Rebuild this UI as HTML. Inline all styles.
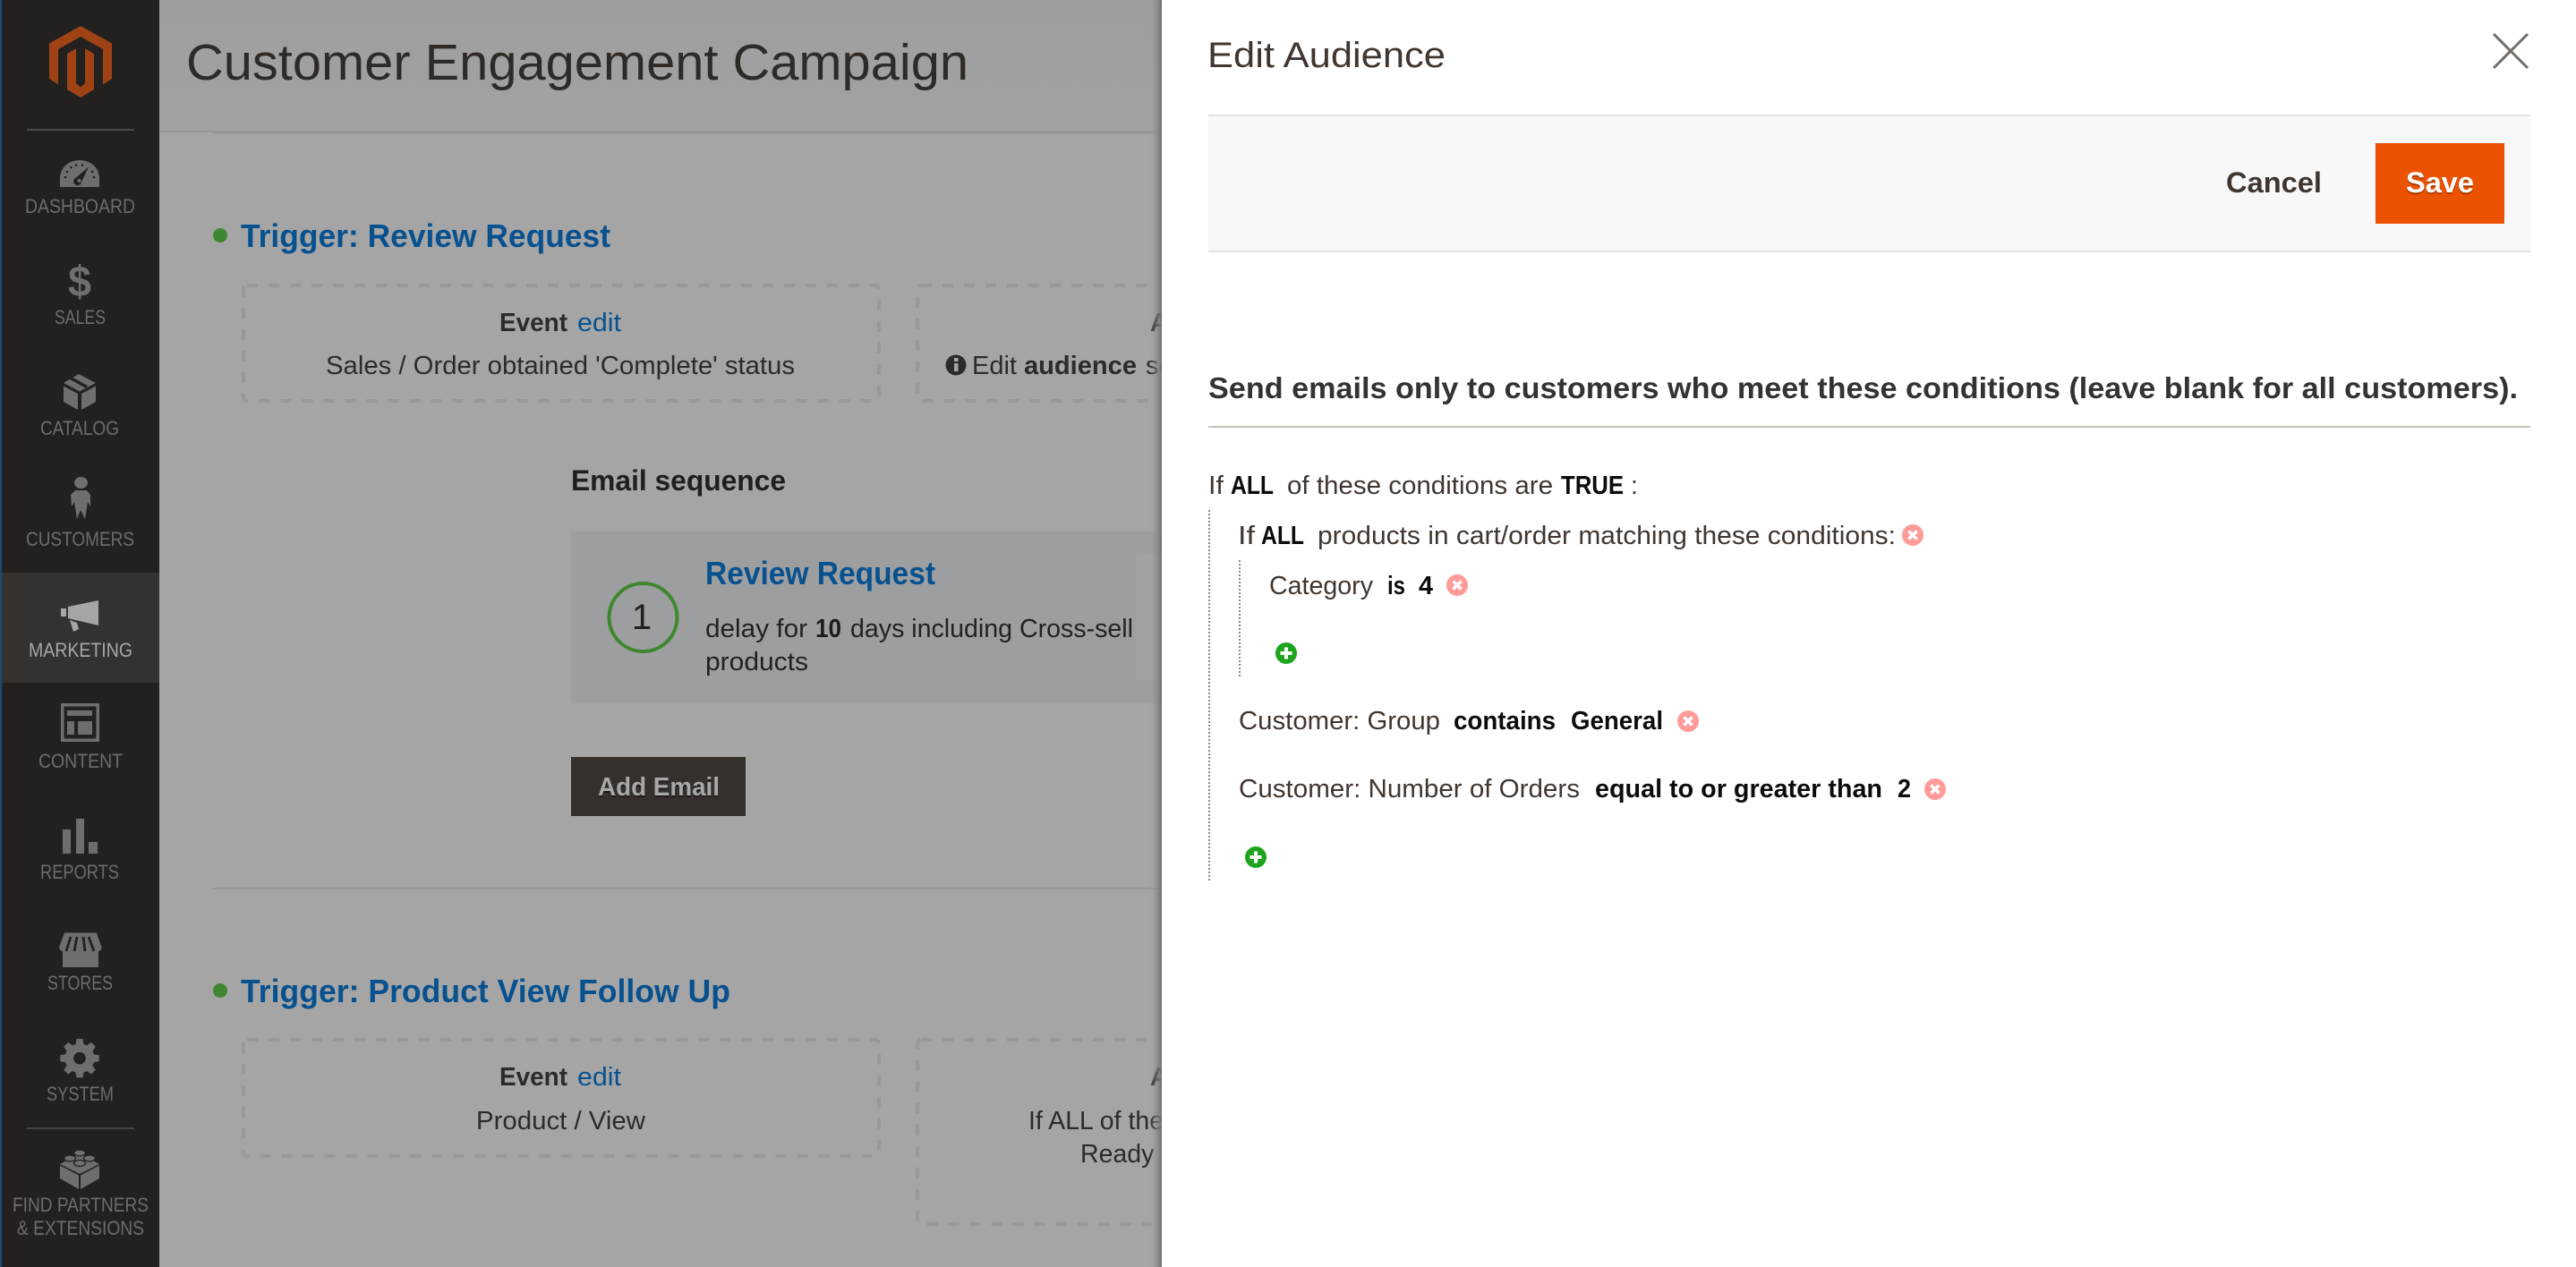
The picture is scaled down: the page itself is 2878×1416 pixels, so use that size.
<!DOCTYPE html>
<html lang="en">
<head>
<meta charset="utf-8">
<title>Customer Engagement Campaign - Edit Audience</title>
<style>
html,body{margin:0;padding:0;width:2878px;height:1416px;overflow:hidden;background:#a5a5a5}
svg{display:block}
text{font-family:"Liberation Sans",Arial,sans-serif;white-space:pre}
.nav{font-size:22px;fill:#6d6c6a}
.t{font-size:28.5px;fill:#2e2a27}
.b{font-weight:700}
.lk{fill:#07518f}
.m{font-size:28.5px;fill:#41362f}
.k{font-size:28.5px;fill:#0c0c0c;font-weight:700}
</style>
</head>
<body>
<svg xmlns="http://www.w3.org/2000/svg" width="2878" height="1416" viewBox="0 0 2878 1416">
<defs>
<linearGradient id="hd" x1="0" y1="0" x2="0" y2="1"><stop offset="0" stop-color="#9e9e9e"/><stop offset="1" stop-color="#a2a2a2"/></linearGradient>
<linearGradient id="sh" x1="0" y1="0" x2="1" y2="0"><stop offset="0" stop-color="#a5a5a5" stop-opacity="0"/><stop offset="1" stop-color="#6f6f6f"/></linearGradient>
<clipPath id="left"><rect x="0" y="0" width="1298" height="1416"/></clipPath>
</defs>

<!-- main -->
<rect x="178" y="0" width="1120" height="1416" fill="#a5a5a5"/>
<rect x="178" y="0" width="1120" height="146" fill="url(#hd)"/>
<rect x="178" y="146" width="1120" height="2" fill="#979797"/>
<rect x="238" y="148" width="1060" height="2" fill="#9b9b9b"/>

<g clip-path="url(#left)">
<text x="208" y="89" font-size="57" fill="#2e2a27" textLength="874" lengthAdjust="spacingAndGlyphs">Customer Engagement Campaign</text>

<circle cx="246" cy="263" r="8" fill="#3f872f"/>
<text x="269" y="276" font-size="36" class="b lk" textLength="413" lengthAdjust="spacingAndGlyphs">Trigger: Review Request</text>

<rect x="272" y="319" width="710" height="129" rx="4" fill="none" stroke="#989898" stroke-width="4" stroke-dasharray="12 12"/>
<text x="558" y="370" class="t b" textLength="76" lengthAdjust="spacingAndGlyphs">Event</text>
<text x="645" y="370" class="t lk" textLength="49" lengthAdjust="spacingAndGlyphs">edit</text>
<text x="364" y="418" class="t" textLength="524" lengthAdjust="spacingAndGlyphs">Sales / Order obtained 'Complete' status</text>

<rect x="1025" y="319" width="500" height="129" rx="4" fill="none" stroke="#989898" stroke-width="4" stroke-dasharray="12 12"/>
<text x="1285" y="370" class="t b">Audience</text>
<circle cx="1068" cy="408" r="11.500" fill="#2e2a27"/>
<rect x="1066" y="406" width="4.500" height="9" fill="#a5a5a5"/>
<rect x="1066" y="400" width="4.500" height="4" fill="#a5a5a5"/>
<text x="1086" y="418" class="t" textLength="50" lengthAdjust="spacingAndGlyphs">Edit</text>
<text x="1144" y="418" class="t b" textLength="126" lengthAdjust="spacingAndGlyphs">audience</text>
<text x="1280" y="418" class="t">settings</text>

<text x="638" y="548" font-size="32" class="b" fill="#1f1f1f" textLength="240" lengthAdjust="spacingAndGlyphs">Email sequence</text>

<rect x="638" y="594" width="660" height="192" fill="#9d9ea0"/>
<rect x="1269" y="620" width="40" height="140" rx="4" fill="#a1a2a3"/>
<circle cx="718.500" cy="690" r="38" fill="none" stroke="#3f872f" stroke-width="4"/>
<text x="717" y="703" font-size="40" text-anchor="middle" fill="#1f1f1f">1</text>
<text x="788" y="653" font-size="36" class="b lk" textLength="257" lengthAdjust="spacingAndGlyphs">Review Request</text>
<text x="788" y="712" font-size="28.500" fill="#222222" textLength="114" lengthAdjust="spacingAndGlyphs">delay for</text>
<text x="911" y="712" font-size="28.500" class="b" fill="#1c1c1c" textLength="29" lengthAdjust="spacingAndGlyphs">10</text>
<text x="950" y="712" font-size="28.500" fill="#222222" textLength="316" lengthAdjust="spacingAndGlyphs">days including Cross-sell</text>
<text x="788" y="749" font-size="28.500" fill="#222222" textLength="115" lengthAdjust="spacingAndGlyphs">products</text>

<rect x="638" y="846" width="195" height="66" fill="#35302c"/>
<text x="668" y="891" font-size="28.500" class="b" fill="#1d1a18" textLength="136" lengthAdjust="spacingAndGlyphs">Add Email</text>
<text x="668" y="889" font-size="28.500" class="b" fill="#a8a8a6" textLength="136" lengthAdjust="spacingAndGlyphs">Add Email</text>

<rect x="238" y="992" width="1060" height="2" fill="#979797"/>

<circle cx="246" cy="1107" r="8" fill="#3f872f"/>
<text x="269" y="1120" font-size="36" class="b lk" textLength="547" lengthAdjust="spacingAndGlyphs">Trigger: Product View Follow Up</text>

<rect x="272" y="1162" width="710" height="130" rx="4" fill="none" stroke="#989898" stroke-width="4" stroke-dasharray="12 12"/>
<text x="558" y="1213" class="t b" textLength="76" lengthAdjust="spacingAndGlyphs">Event</text>
<text x="645" y="1213" class="t lk" textLength="49" lengthAdjust="spacingAndGlyphs">edit</text>
<text x="532" y="1262" class="t" textLength="189" lengthAdjust="spacingAndGlyphs">Product / View</text>

<rect x="1025" y="1162" width="500" height="206" rx="4" fill="none" stroke="#989898" stroke-width="4" stroke-dasharray="12 12"/>
<text x="1285" y="1213" class="t b">Audience</text>
<text x="1149" y="1262" class="t">If ALL of these conditions</text>
<text x="1207" y="1299" class="t">Ready to go</text>
</g>

<!-- modal shadow -->
<rect x="1284" y="0" width="14" height="1416" fill="url(#sh)"/>

<!-- sidebar -->
<rect x="0" y="0" width="178" height="1416" fill="#222120"/>
<rect x="0" y="0" width="2" height="1416" fill="#1d4a75"/>
<path d="M90 29L125 48.500V88L115 94.500V55L90 41L65 55V94.500L55 88V48.500Z" fill="#a04314"/>
<path d="M85 54.300L75 60V100L90 109L105 100V60L95 54.300V93.300L90 97.300L85 93.300Z" fill="#a04314"/>
<rect x="30" y="144" width="120" height="2" fill="#4f4a48"/>

<!-- dashboard -->
<path d="M67 209V200C67 187 77 179 89 179S111 187 111 200V209Z" fill="#6f6e6c"/>
<path d="M99 186.500L91 203.500A4.500 4.500 0 1 1 85 198.500Z" fill="#222120"/>
<circle cx="88.500" cy="202" r="2" fill="#6f6e6c"/>
<g fill="#222120"><circle cx="73" cy="198" r="1.300"/><circle cx="75" cy="192" r="1.300"/><circle cx="79.500" cy="187" r="1.300"/><circle cx="85" cy="184.500" r="1.300"/><circle cx="92" cy="184.500" r="1.300"/><circle cx="103" cy="192" r="1.300"/><circle cx="105" cy="198" r="1.300"/></g>
<text x="28" y="238" class="nav" textLength="123" lengthAdjust="spacingAndGlyphs">DASHBOARD</text>

<!-- sales -->
<text x="76" y="331" font-size="48" font-weight="700" fill="#6f6e6c" textLength="26" lengthAdjust="spacingAndGlyphs">$</text>
<text x="61" y="362" class="nav" textLength="57" lengthAdjust="spacingAndGlyphs">SALES</text>

<!-- catalog -->
<path d="M88 418L107 428L89 437.500L71 428Z" fill="#6f6e6c"/>
<path d="M78 422L97 432.500" stroke="#222120" stroke-width="3.500" fill="none"/>
<path d="M71 431.500L87 440V458L71 449ZM91 440L107 431.500V449L91 458Z" fill="#6f6e6c"/>
<text x="45" y="486" class="nav" textLength="88" lengthAdjust="spacingAndGlyphs">CATALOG</text>

<!-- customers -->
<ellipse cx="90.500" cy="539.500" rx="7.500" ry="6.500" fill="#6f6e6c"/>
<path d="M84 548H97L101 553V566L98 561L95 580L90 570L86 580L83 561L80 566L79 553Z" fill="#6f6e6c"/>
<text x="29" y="610" class="nav" textLength="121" lengthAdjust="spacingAndGlyphs">CUSTOMERS</text>

<!-- marketing -->
<rect x="2" y="640" width="176" height="123" fill="#35312f"/>
<path d="M76 678L110 671V699L76 691ZM68 680H74V689H68ZM78 693L86 696L88 703L82 706Z" fill="#a7a5a1"/>
<text x="32" y="734" class="nav" style="fill:#a7a5a1" textLength="116" lengthAdjust="spacingAndGlyphs">MARKETING</text>

<!-- content -->
<rect x="69.750" y="787.750" width="39.500" height="39.500" fill="none" stroke="#6f6e6c" stroke-width="3.500"/>
<path d="M75 794H103V800H75ZM75 806H83V821H75ZM87 806H103V821H87Z" fill="#6f6e6c"/>
<text x="43" y="858" class="nav" textLength="94" lengthAdjust="spacingAndGlyphs">CONTENT</text>

<!-- reports -->
<path d="M70 927H79V954H70ZM85 915H94V954H85ZM99 941H109V954H99Z" fill="#6f6e6c"/>
<text x="45" y="982" class="nav" textLength="88" lengthAdjust="spacingAndGlyphs">REPORTS</text>

<!-- stores -->
<path d="M72 1042.500H108L113.500 1059Q113 1063 110 1063V1081H70V1063Q67 1063 66 1059Z" fill="#6f6e6c"/>
<path d="M79 1047L74 1063M86 1047L83 1063M93 1047L95 1063M99 1047L105 1063" stroke="#222120" stroke-width="2.800" fill="none"/>
<text x="53" y="1106" class="nav" textLength="73" lengthAdjust="spacingAndGlyphs">STORES</text>

<!-- system -->
<g fill="#6f6e6c">
<circle cx="89" cy="1182.700" r="16.500"/>
<path id="tooth" d="M84 1170L85.500 1161H92.500L94 1170Z"/>
<path d="M84 1170L85.500 1161H92.500L94 1170Z" transform="rotate(45 89 1182.700)"/>
<path d="M84 1170L85.500 1161H92.500L94 1170Z" transform="rotate(90 89 1182.700)"/>
<path d="M84 1170L85.500 1161H92.500L94 1170Z" transform="rotate(135 89 1182.700)"/>
<path d="M84 1170L85.500 1161H92.500L94 1170Z" transform="rotate(180 89 1182.700)"/>
<path d="M84 1170L85.500 1161H92.500L94 1170Z" transform="rotate(225 89 1182.700)"/>
<path d="M84 1170L85.500 1161H92.500L94 1170Z" transform="rotate(270 89 1182.700)"/>
<path d="M84 1170L85.500 1161H92.500L94 1170Z" transform="rotate(315 89 1182.700)"/>
</g>
<circle cx="89" cy="1182.700" r="6.800" fill="#222120"/>
<text x="52" y="1230" class="nav" textLength="75" lengthAdjust="spacingAndGlyphs">SYSTEM</text>

<rect x="30" y="1260" width="120" height="2" fill="#4a4240"/>

<!-- partners -->
<path d="M67 1301L89 1289L111 1301L89 1312Z" fill="#6f6e6c"/>
<path d="M67 1302.500L88 1313.500V1329L67 1317ZM111 1302.500L90 1313.500V1329L111 1317Z" fill="#6f6e6c"/>
<g fill="#6f6e6c" stroke="#222120" stroke-width="1.300">
<ellipse cx="89" cy="1288.500" rx="6.500" ry="3.500"/>
<ellipse cx="78" cy="1294.500" rx="6.500" ry="3.500"/>
<ellipse cx="100" cy="1294.500" rx="6.500" ry="3.500"/>
<ellipse cx="89" cy="1300" rx="6.500" ry="3.500"/>
</g>
<text x="14" y="1354" class="nav" textLength="152" lengthAdjust="spacingAndGlyphs">FIND PARTNERS</text>
<text x="19" y="1380" class="nav" textLength="142" lengthAdjust="spacingAndGlyphs">&amp; EXTENSIONS</text>

<!-- modal -->
<rect x="1298" y="0" width="1580" height="1416" fill="#ffffff"/>
<text x="1349" y="75" font-size="40" fill="#41362f" textLength="266" lengthAdjust="spacingAndGlyphs">Edit Audience</text>
<path d="M2786 38L2824 76M2824 38L2786 76" stroke="#736d68" stroke-width="3" fill="none"/>

<rect x="1350" y="128" width="1477" height="154" fill="#f8f8f8"/>
<rect x="1350" y="128" width="1477" height="2" fill="#e3e3e3"/>
<rect x="1350" y="280" width="1477" height="2" fill="#e3e3e3"/>

<text x="2487" y="215" font-size="32" font-weight="700" fill="#41362f" textLength="107" lengthAdjust="spacingAndGlyphs">Cancel</text>
<rect x="2654" y="160" width="144" height="90" fill="#eb5202"/>
<text x="2688" y="217" font-size="32" font-weight="700" fill="#a83a00" textLength="76" lengthAdjust="spacingAndGlyphs">Save</text>
<text x="2688" y="215" font-size="32" font-weight="700" fill="#ffffff" textLength="76" lengthAdjust="spacingAndGlyphs">Save</text>

<text x="1350" y="445" font-size="33" font-weight="700" fill="#333333" textLength="1463" lengthAdjust="spacingAndGlyphs">Send emails only to customers who meet these conditions (leave blank for all customers).</text>
<rect x="1350" y="476" width="1477" height="2" fill="#c8c3b8"/>

<!-- conditions -->
<text x="1350" y="552" class="m" textLength="17" lengthAdjust="spacingAndGlyphs">If</text>
<text x="1375" y="552" class="k" textLength="48" lengthAdjust="spacingAndGlyphs">ALL</text>
<text x="1438" y="552" class="m" textLength="297" lengthAdjust="spacingAndGlyphs">of these conditions are</text>
<text x="1744" y="552" class="k" textLength="70" lengthAdjust="spacingAndGlyphs">TRUE</text>
<text x="1822" y="552" class="m">:</text>

<path d="M1351 570V986" stroke="#8a8a8a" stroke-width="2" stroke-dasharray="2 2" fill="none"/>

<text x="1383" y="608" class="m" textLength="19" lengthAdjust="spacingAndGlyphs">If</text>
<text x="1409" y="608" class="k" textLength="48" lengthAdjust="spacingAndGlyphs">ALL</text>
<text x="1472" y="608" class="m" textLength="646" lengthAdjust="spacingAndGlyphs">products in cart/order matching these conditions:</text>
<circle cx="2137" cy="598" r="12" fill="#ff9c9a"/>
<path d="M2132.500 593.500L2141.500 602.500M2141.500 593.500L2132.500 602.500" stroke="#fff" stroke-width="3.500"/>

<path d="M1385 626V758" stroke="#8a8a8a" stroke-width="2" stroke-dasharray="2 2" fill="none"/>

<text x="1418" y="664" class="m" textLength="116" lengthAdjust="spacingAndGlyphs">Category</text>
<text x="1550" y="664" class="k" textLength="20" lengthAdjust="spacingAndGlyphs">is</text>
<text x="1585" y="664" class="k" textLength="16" lengthAdjust="spacingAndGlyphs">4</text>
<circle cx="1628" cy="654" r="12" fill="#ff9c9a"/>
<path d="M1623.500 649.500L1632.500 658.500M1632.500 649.500L1623.500 658.500" stroke="#fff" stroke-width="3.500"/>

<circle cx="1437" cy="730" r="12" fill="#1ea41e"/>
<path d="M1437 723.500V736.500M1430.500 730H1443.500" stroke="#fff" stroke-width="4"/>

<text x="1384" y="815" class="m" textLength="225" lengthAdjust="spacingAndGlyphs">Customer: Group</text>
<text x="1624" y="815" class="k" textLength="114" lengthAdjust="spacingAndGlyphs">contains</text>
<text x="1755" y="815" class="k" textLength="103" lengthAdjust="spacingAndGlyphs">General</text>
<circle cx="1886" cy="806" r="12" fill="#ff9c9a"/>
<path d="M1881.500 801.500L1890.500 810.500M1890.500 801.500L1881.500 810.500" stroke="#fff" stroke-width="3.500"/>

<text x="1384" y="891" class="m" textLength="381" lengthAdjust="spacingAndGlyphs">Customer: Number of Orders</text>
<text x="1782" y="891" class="k" textLength="321" lengthAdjust="spacingAndGlyphs">equal to or greater than</text>
<text x="2120" y="891" class="k" textLength="15" lengthAdjust="spacingAndGlyphs">2</text>
<circle cx="2162" cy="882" r="12" fill="#ff9c9a"/>
<path d="M2157.500 877.500L2166.500 886.500M2166.500 877.500L2157.500 886.500" stroke="#fff" stroke-width="3.500"/>

<circle cx="1403" cy="958" r="12" fill="#1ea41e"/>
<path d="M1403 951.500V964.500M1396.500 958H1409.500" stroke="#fff" stroke-width="4"/>
</svg>
</body>
</html>
